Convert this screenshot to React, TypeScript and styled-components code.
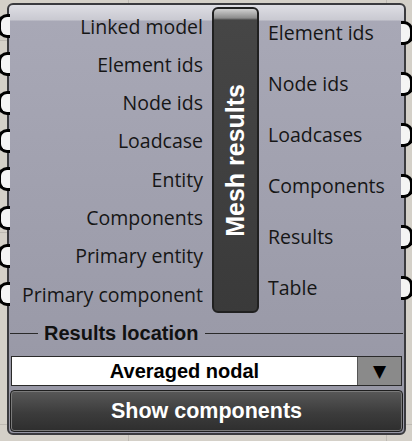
import { FC } from 'react';
import styled, { createGlobalStyle } from 'styled-components';

const GlobalStyle = createGlobalStyle`
    html, body {
        margin: 0;
        padding: 0;
    }
    * {
        box-sizing: border-box;
    }
`;

const Canvas = styled.div`
    width: 412px;
    height: 441px;
    overflow: hidden;
    padding: 3px 6px 6px 7px;
    background-color: #d4d0c8;
    background-image:
        linear-gradient(to bottom, transparent 40px, #bebab3 40px, #bebab3 41px, transparent 41px),
        linear-gradient(to bottom, transparent 232px, #bebab3 232px, #bebab3 233px, transparent 233px),
        linear-gradient(to bottom, transparent 424px, #bebab3 424px, #bebab3 425px, transparent 425px),
        linear-gradient(to right, transparent 128px, #bebab3 128px, #bebab3 129px, transparent 129px),
        linear-gradient(to right, transparent 386px, #bebab3 386px, #bebab3 387px, transparent 387px);
`;

const Node = styled.div`
    height: 100%;
    display: flex;
    flex-direction: column;
    padding: 2px 1px 1px 1px;
    border: 2px solid #3a3a3e;
    border-radius: 6px;
    background: linear-gradient(
        to bottom,
        #dedee4 0,
        #c9c9d1 15px,
        #a8a8b6 16px,
        #9696a4 100%
    );
`;

const Main = styled.div`
    display: flex;
    height: 307px;
`;

const Params = styled.div<{ $side: 'in' | 'out' }>`
    display: flex;
    flex-direction: column;
    width: ${p => (p.$side === 'in' ? '202px' : '144px')};
    padding: ${p => (p.$side === 'in' ? '0 9px 0 0' : '0 0 0 9px')};
`;

const Param = styled.div<{ $side: 'in' | 'out' }>`
    position: relative;
    flex: 1;
    display: flex;
    align-items: center;
    justify-content: ${p => (p.$side === 'in' ? 'flex-end' : 'flex-start')};
    font-family: 'Open Sans', sans-serif;
    font-size: 19.5px;
    color: #161616;
    white-space: nowrap;

    &::before {
        content: '';
        position: absolute;
        top: 50%;
        width: 9px;
        height: 18px;
        transform: translateY(-50%);
        background: #f4f4f4;
        border: 3px solid #000;
        ${p =>
            p.$side === 'in'
                ? 'left: -12px; border-right: 0; border-radius: 9px 0 0 9px;'
                : 'right: -10px; border-left: 0; border-radius: 0 9px 9px 0;'}
    }
`;

const TitleBar = styled.div`
    width: 47px;
    display: flex;
    align-items: center;
    justify-content: center;
    border: 2px solid #202020;
    border-radius: 6px;
    background: linear-gradient(
        to bottom,
        #d0d0d0 0,
        #8c8c8c 9px,
        #464646 11px,
        #3a3a3a 100%
    );
`;

const TitleText = styled.span`
    writing-mode: vertical-rl;
    transform: rotate(180deg);
    font-family: 'Liberation Sans', Arial, sans-serif;
    font-weight: 700;
    font-size: 25px;
    color: #fff;
    white-space: nowrap;
`;

const Divider = styled.div`
    display: flex;
    align-items: center;
    gap: 6px;
    height: 43px;
    padding: 0 0 2px 0;
    font-family: 'Liberation Sans', Arial, sans-serif;
    font-weight: 700;
    font-size: 20px;
    color: #111;

    &::before,
    &::after {
        content: '';
        height: 1px;
        background: #2a2a2a;
    }
    &::before {
        width: 28px;
    }
    &::after {
        flex: 1;
        margin-left: 1px;
    }
`;

const Dropdown = styled.div`
    display: flex;
    height: 30px;
    margin: 0 1px;
    border: 1px solid #2a2a2a;
    background: #fff;
`;

const DropdownValue = styled.div`
    flex: 1;
    display: flex;
    align-items: center;
    justify-content: center;
    font-family: 'Liberation Sans', Arial, sans-serif;
    font-weight: 700;
    font-size: 20px;
    color: #000;
`;

const DropdownArrow = styled.div`
    width: 44px;
    display: flex;
    align-items: center;
    justify-content: center;
    background: #8a8a8a;
    border-left: 1px solid #555;
    font-family: 'DejaVu Sans', sans-serif;
    font-size: 17px;
    color: #000;
`;

const Button = styled.div`
    display: flex;
    align-items: center;
    justify-content: center;
    height: 42px;
    margin-top: 4px;
    border: 1px solid #1e1e1e;
    border-radius: 4px;
    box-shadow: inset 0 0 0 1px #7a7a7a;
    background: linear-gradient(to bottom, #585858 0, #3c3c3c 55%, #2e2e2e 100%);
    font-family: 'Liberation Sans', Arial, sans-serif;
    font-weight: 700;
    font-size: 21.5px;
    color: #fff;
`;

const inputs = [
    'Linked model',
    'Element ids',
    'Node ids',
    'Loadcase',
    'Entity',
    'Components',
    'Primary entity',
    'Primary component',
];

const outputs = ['Element ids', 'Node ids', 'Loadcases', 'Components', 'Results', 'Table'];

const App: FC = () => {
    return (
        <>
            <GlobalStyle />
            <Canvas>
                <Node>
                    <Main>
                        <Params $side="in">
                            {inputs.map(name => (
                                <Param key={name} $side="in">
                                    {name}
                                </Param>
                            ))}
                        </Params>
                        <TitleBar>
                            <TitleText>Mesh results</TitleText>
                        </TitleBar>
                        <Params $side="out">
                            {outputs.map(name => (
                                <Param key={name} $side="out">
                                    {name}
                                </Param>
                            ))}
                        </Params>
                    </Main>
                    <Divider>Results location</Divider>
                    <Dropdown>
                        <DropdownValue>Averaged nodal</DropdownValue>
                        <DropdownArrow>▼</DropdownArrow>
                    </Dropdown>
                    <Button>Show components</Button>
                </Node>
            </Canvas>
        </>
    );
};

export default App;
